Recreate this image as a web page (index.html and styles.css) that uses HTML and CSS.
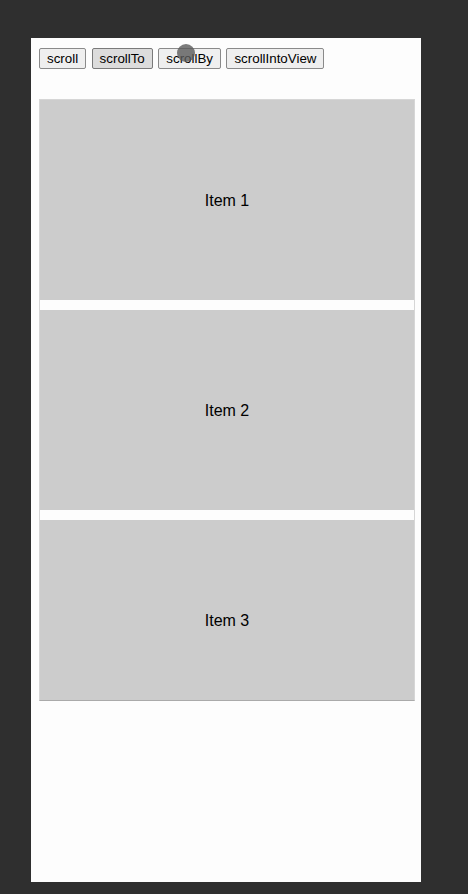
FILE: index.html
```html
<!DOCTYPE html>
<html>
<head>
<meta charset="utf-8">
<link rel="stylesheet" href="styles.css">
</head>
<body>
<div class="screen">
  <div class="toolbar">
    <button class="btn">scroll</button>
    <button class="btn btn-active">scrollTo</button>
    <button class="btn">scrollBy</button>
    <button class="btn">scrollIntoView</button>
    <span class="touch"></span>
  </div>
  <div class="list">
    <div class="item">Item 1</div>
    <div class="item">Item 2</div>
    <div class="item">Item 3</div>
  </div>
</div>
</body>
</html>
```
FILE: styles.css
```css
html, body {
  margin: 0;
  padding: 0;
  background: #2f2f2f;
  width: 468px;
  height: 894px;
  overflow: hidden;
}
.screen {
  margin: 38px 0 0 31px;
  width: 390px;
  height: 844px;
  background: #fdfdfd;
  box-sizing: border-box;
  padding: 10px 0 0 8px;
  font-family: "Liberation Sans", Arial, sans-serif;
}
.toolbar {
  position: relative;
  display: flex;
  gap: 5.5px;
  height: 21px;
}
.btn {
  font-family: "Liberation Sans", Arial, sans-serif;
  font-size: 13.33px;
  line-height: 15px;
  color: #000;
  background: #efefef;
  border: 1px solid #8a8a8a;
  border-radius: 2px;
  padding: 2px 7px;
  margin: 0;
  height: 21px;
}
.btn-active {
  background: #dcdcdc;
  border-color: #7a7a7a;
}
.touch {
  position: absolute;
  left: 138px;
  top: -4px;
  width: 18px;
  height: 18px;
  border-radius: 50%;
  background: rgba(90, 90, 90, 0.8);
}
.list {
  margin-top: 30px;
  width: 374px;
  height: 600px;
  border: 1px solid #d6d6d6;
  border-bottom-color: #aaaaaa;
  overflow: hidden;
  background: #fdfdfd;
}
.item {
  box-sizing: border-box;
  height: 200px;
  padding-top: 2px;
  margin-bottom: 10px;
  background: #cccccc;
  display: flex;
  align-items: center;
  justify-content: center;
  font-size: 16px;
  color: #000;
}
```
